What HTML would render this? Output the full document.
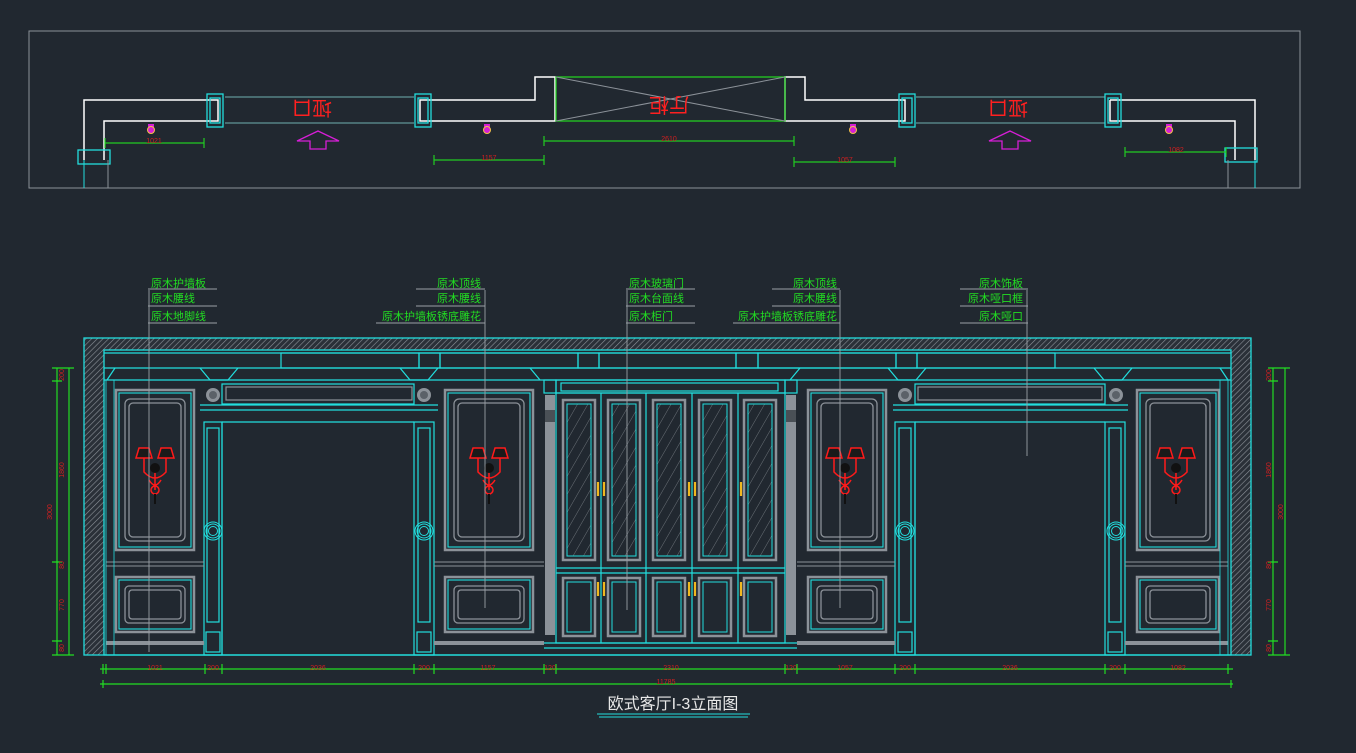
<!DOCTYPE html>
<html><head><meta charset="utf-8"><style>
html,body{margin:0;padding:0;background:#212830;}
svg{display:block}
text{font-family:"Liberation Sans","Noto Sans CJK SC",sans-serif;}
</style></head><body>
<svg width="1356" height="753" viewBox="0 0 1356 753" xmlns="http://www.w3.org/2000/svg">
<defs>
<pattern id="hat" width="4" height="4" patternUnits="userSpaceOnUse" patternTransform="rotate(45)">
<rect width="4" height="4" fill="#2a3038"/><line x1="0" y1="0" x2="0" y2="4" stroke="#8c9299" stroke-width="1.2"/></pattern>
<pattern id="gl" width="9" height="9" patternUnits="userSpaceOnUse" patternTransform="rotate(30)">
<line x1="0" y1="0" x2="0" y2="9" stroke="#7d848a" stroke-width="0.8"/></pattern>
<g id="sc">
<path d="M-16,-22 h10 l3,10 h-16z M6,-22 h10 l3,10 h-16z" fill="#1a1a1a" stroke="#ff1a1a" stroke-width="1.5"/>
<path d="M-11,-12 v14 q11,12 22,0 v-14 M0,-4 v24 M-6,10 q6,10 12,0" fill="none" stroke="#ff1a1a" stroke-width="1.5"/>
<circle cx="0" cy="-2" r="5" fill="#111"/><circle cx="0" cy="20" r="4" fill="none" stroke="#ff1a1a" stroke-width="1.5"/>
<line x1="0" y1="24" x2="0" y2="34" stroke="#111" stroke-width="2"/>
</g>
<g id="ros"><circle r="7" fill="#8c9299"/><circle r="4" fill="#5b6168"/></g>
<g id="ring" fill="none" stroke="#22dede"><circle r="7"/><circle r="4.5"/><circle r="9"/></g>
<g id="arr"><path d="M0,0 L-21,10 L-8,10 L-8,18 L8,18 L8,10 L21,10Z" fill="none" stroke="#d61ed6" stroke-width="1.3"/></g>
<g id="dot"><rect x="-3" y="-6" width="6" height="3" fill="#d61ed6"/><circle r="3.5" fill="#d61ed6" stroke="#f5c04a" stroke-width="1"/></g>
</defs>

<!-- PLAN -->
<rect x="29" y="31" width="1271" height="157" fill="none" stroke="#8c9299" stroke-width="1"/>
<g fill="none" stroke="#ffffff" stroke-width="1.5">
<path d="M84,160 V100 H218 V121 H104 V160"/>
<path d="M420,100 H535 V77 H555 V121 H420Z"/>
<path d="M785,77 H805 V100 H905 V121 H785Z"/>
<path d="M1110,100 H1255 V160 M1235,160 V121 H1110 V100"/>
</g>
<g fill="none" stroke="#6fb0b0" stroke-width="1"><line x1="225" y1="97" x2="414" y2="97"/><line x1="225" y1="123" x2="414" y2="123"/><line x1="916" y1="97" x2="1105" y2="97"/><line x1="916" y1="123" x2="1105" y2="123"/></g>
<rect x="556" y="77" width="229" height="44" fill="none" stroke="#22cc22" stroke-width="1.3"/>
<path d="M556,77 L785,121 M785,77 L556,121" stroke="#8c9299" stroke-width="1"/>
<g fill="none" stroke="#22dede" stroke-width="1.3">
<rect x="207" y="94" width="16" height="33"/><rect x="210" y="98" width="10" height="25"/>
<rect x="415" y="94" width="16" height="33"/><rect x="418" y="98" width="10" height="25"/>
<rect x="899" y="94" width="16" height="33"/><rect x="902" y="98" width="10" height="25"/>
<rect x="1105" y="94" width="16" height="33"/><rect x="1108" y="98" width="10" height="25"/>
<rect x="78" y="150" width="32" height="14"/><rect x="1225" y="148" width="32" height="14"/>
</g>
<line x1="108" y1="160" x2="108" y2="188" stroke="#8c9299"/><line x1="1228" y1="160" x2="1228" y2="188" stroke="#8c9299"/>
<line x1="84" y1="160" x2="84" y2="188" stroke="#22dede"/><line x1="1255" y1="160" x2="1255" y2="188" stroke="#22dede"/>
<g font-size="20" text-anchor="middle" fill="#ff2020">
<text transform="translate(312,101) rotate(180)">垭口</text>
<text transform="translate(1008,101) rotate(180)">垭口</text>
<text transform="translate(669,98) rotate(180)">厅柜</text>
</g>
<use href="#arr" x="318" y="131"/><use href="#arr" x="1010" y="131"/>
<use href="#dot" x="151" y="130"/><use href="#dot" x="487" y="130"/><use href="#dot" x="853" y="130"/><use href="#dot" x="1169" y="130"/>
<g stroke="#22cc22" stroke-width="1.2">
<line x1="105" y1="143" x2="204" y2="143"/><line x1="105" y1="138" x2="105" y2="148"/><line x1="204" y1="138" x2="204" y2="148"/>
<line x1="434" y1="160" x2="544" y2="160"/><line x1="434" y1="155" x2="434" y2="165"/><line x1="544" y1="155" x2="544" y2="165"/>
<line x1="544" y1="141" x2="794" y2="141"/><line x1="544" y1="136" x2="544" y2="146"/><line x1="794" y1="136" x2="794" y2="146"/>
<line x1="794" y1="162" x2="895" y2="162"/><line x1="794" y1="157" x2="794" y2="167"/><line x1="895" y1="157" x2="895" y2="167"/>
<line x1="1125" y1="152" x2="1226" y2="152"/><line x1="1125" y1="147" x2="1125" y2="157"/><line x1="1226" y1="147" x2="1226" y2="157"/>
</g>
<g font-size="7" fill="#d02020" text-anchor="middle">
<text x="154" y="143">1021</text><text x="489" y="160">1157</text><text x="669" y="141">2610</text><text x="845" y="162">1057</text><text x="1176" y="152">1082</text>
</g>

<!-- ELEVATION -->
<rect x="84" y="338" width="1167" height="317" fill="url(#hat)"/>
<rect x="104" y="350" width="1127" height="305" fill="#212830"/>
<rect x="84" y="338" width="1167" height="317" fill="none" stroke="#22dede" stroke-width="1.3"/>
<rect x="104" y="350" width="1127" height="305" fill="none" stroke="#22dede" stroke-width="1.3"/>
<g fill="none" stroke="#22dede" stroke-width="1.2">
<line x1="104" y1="353" x2="1231" y2="353"/>
<line x1="104" y1="368" x2="1231" y2="368"/>
<line x1="104" y1="380" x2="1231" y2="380"/>
<rect x="281" y="353" width="138" height="15"/><rect x="419" y="353" width="21" height="15"/><rect x="440" y="353" width="138" height="15"/>
<rect x="578" y="353" width="21" height="15"/><rect x="599" y="353" width="137" height="15"/><rect x="736" y="353" width="22" height="15"/>
<rect x="758" y="353" width="138" height="15"/><rect x="896" y="353" width="21" height="15"/><rect x="917" y="353" width="138" height="15"/>
<path d="M107,380 l8,-12 M200,368 l10,12 h18 l10,-12 M400,368 l10,12 h18 l10,-12 M530,368 l10,12 M800,368 l-10,12 M888,368 l10,12 h18 l10,-12 M1094,368 l10,12 h18 l10,-12 M1220,368 l8,12"/>
<rect x="222" y="384" width="192" height="20"/><rect x="226" y="387" width="186" height="13" stroke="#8c9299"/>
<rect x="915" y="384" width="190" height="20"/><rect x="918" y="387" width="184" height="13" stroke="#8c9299"/>
<line x1="200" y1="405" x2="438" y2="405"/><line x1="200" y1="410" x2="438" y2="410"/><line x1="222" y1="422" x2="414" y2="422"/>
<line x1="893" y1="405" x2="1128" y2="405"/><line x1="893" y1="410" x2="1128" y2="410"/><line x1="915" y1="422" x2="1105" y2="422"/>
<rect x="204" y="422" width="18" height="233"/><rect x="207" y="428" width="12" height="194"/><rect x="206" y="632" width="14" height="20"/>
<rect x="414" y="422" width="20" height="233"/><rect x="418" y="428" width="12" height="194"/><rect x="417" y="632" width="14" height="20"/>
<rect x="895" y="422" width="20" height="233"/><rect x="899" y="428" width="12" height="194"/><rect x="898" y="632" width="14" height="20"/>
<rect x="1105" y="422" width="20" height="233"/><rect x="1109" y="428" width="12" height="194"/><rect x="1108" y="632" width="14" height="20"/>
<line x1="222" y1="422" x2="222" y2="655"/><line x1="915" y1="422" x2="915" y2="655"/>
<rect x="556" y="380" width="229" height="13"/><rect x="561" y="383" width="217" height="8"/>
<rect x="556" y="393" width="229" height="250"/>
<line x1="556" y1="568" x2="785" y2="568"/><line x1="556" y1="573" x2="785" y2="573"/>
<line x1="601" y1="393" x2="601" y2="643"/><line x1="646" y1="393" x2="646" y2="643"/><line x1="692" y1="393" x2="692" y2="643"/><line x1="738" y1="393" x2="738" y2="643"/>
<line x1="544" y1="643" x2="797" y2="643"/><line x1="544" y1="648" x2="797" y2="648"/>
<rect x="544" y="380" width="12" height="13"/><rect x="785" y="380" width="12" height="13"/>
</g>
<rect x="545" y="395" width="10" height="240" fill="#8c9299"/><rect x="786" y="395" width="10" height="240" fill="#8c9299"/>
<rect x="545" y="410" width="10" height="12" fill="#4a5056"/><rect x="786" y="410" width="10" height="12" fill="#4a5056"/>
<g fill="none">
<g stroke="#8c9299" stroke-width="2.5">
<rect x="563" y="400" width="32" height="160"/><rect x="608" y="400" width="32" height="160"/><rect x="653" y="400" width="32" height="160"/><rect x="699" y="400" width="32" height="160"/><rect x="744" y="400" width="32" height="160"/>
<rect x="563" y="578" width="32" height="58"/><rect x="608" y="578" width="32" height="58"/><rect x="653" y="578" width="32" height="58"/><rect x="699" y="578" width="32" height="58"/><rect x="744" y="578" width="32" height="58"/>
</g>
<g stroke="#22dede" stroke-width="1" fill="url(#gl)">
<rect x="567" y="404" width="24" height="152"/><rect x="612" y="404" width="24" height="152"/><rect x="657" y="404" width="24" height="152"/><rect x="703" y="404" width="24" height="152"/><rect x="748" y="404" width="24" height="152"/>
</g>
<g stroke="#22dede" stroke-width="1">
<rect x="567" y="582" width="24" height="50"/><rect x="612" y="582" width="24" height="50"/><rect x="657" y="582" width="24" height="50"/><rect x="703" y="582" width="24" height="50"/><rect x="748" y="582" width="24" height="50"/>
</g>
</g>
<g stroke="#f0b820" stroke-width="2.2" fill="none">
<path d="M598,482 v14 M604,482 v14 M689,482 v14 M695,482 v14 M741,482 v14 M598,582 v14 M604,582 v14 M689,582 v14 M695,582 v14 M741,582 v14"/>
</g>
<g fill="none">
<g stroke="#8c9299" stroke-width="2.5">
<rect x="116" y="390" width="78" height="160"/><rect x="445" y="390" width="88" height="160"/><rect x="808" y="390" width="78" height="160"/><rect x="1137" y="390" width="82" height="160"/>
<rect x="116" y="577" width="78" height="55"/><rect x="445" y="577" width="88" height="55"/><rect x="808" y="577" width="78" height="55"/><rect x="1137" y="577" width="82" height="55"/>
</g>
<g stroke="#22dede" stroke-width="1.1">
<rect x="119" y="393" width="72" height="154"/><rect x="448" y="393" width="82" height="154"/><rect x="811" y="393" width="72" height="154"/><rect x="1140" y="393" width="76" height="154"/>
<rect x="119" y="580" width="72" height="49"/><rect x="448" y="580" width="82" height="49"/><rect x="811" y="580" width="72" height="49"/><rect x="1140" y="580" width="76" height="49"/>
</g>
<g stroke="#8c9299" stroke-width="1.3">
<rect x="125" y="399" width="60" height="142" rx="5"/><rect x="454" y="399" width="70" height="142" rx="5"/><rect x="817" y="399" width="60" height="142" rx="5"/><rect x="1146" y="399" width="64" height="142" rx="5"/>
<rect x="129" y="403" width="52" height="134" rx="4"/><rect x="458" y="403" width="62" height="134" rx="4"/><rect x="821" y="403" width="52" height="134" rx="4"/><rect x="1150" y="403" width="56" height="134" rx="4"/>
<rect x="125" y="586" width="60" height="37" rx="4"/><rect x="454" y="586" width="70" height="37" rx="4"/><rect x="817" y="586" width="60" height="37" rx="4"/><rect x="1146" y="586" width="64" height="37" rx="4"/>
<rect x="129" y="590" width="52" height="29" rx="3"/><rect x="458" y="590" width="62" height="29" rx="3"/><rect x="821" y="590" width="52" height="29" rx="3"/><rect x="1150" y="590" width="56" height="29" rx="3"/>
</g>
</g>
<g stroke="#8c9299" stroke-width="1">
<path d="M106,562 H204 M106,566 H204 M434,562 H544 M434,566 H544 M797,562 H895 M797,566 H895 M1125,562 H1228 M1125,566 H1228"/>
</g>
<g fill="#8c9299">
<rect x="106" y="641" width="98" height="4"/><rect x="434" y="641" width="110" height="4"/><rect x="797" y="641" width="98" height="4"/><rect x="1125" y="641" width="103" height="4"/>
</g>
<g stroke="#22dede" fill="none"><path d="M106,380 V655 M1228,380 V655 M114,380 V655 M1220,380 V655" stroke-width="0.8"/></g>
<use href="#ros" x="213" y="395"/><use href="#ros" x="424" y="395"/><use href="#ros" x="905" y="395"/><use href="#ros" x="1116" y="395"/>
<use href="#ring" x="213" y="531"/><use href="#ring" x="424" y="531"/><use href="#ring" x="905" y="531"/><use href="#ring" x="1116" y="531"/>
<use href="#sc" x="155" y="470"/><use href="#sc" x="489" y="470"/><use href="#sc" x="845" y="470"/><use href="#sc" x="1176" y="470"/>

<g stroke="#9aa0a6" stroke-width="0.9">
<line x1="149" y1="290" x2="149" y2="652"/><line x1="485" y1="290" x2="485" y2="608"/><line x1="627" y1="290" x2="627" y2="610"/><line x1="840" y1="290" x2="840" y2="608"/><line x1="1027" y1="290" x2="1027" y2="456"/>
<path d="M148,289 H217 M148,306 H217 M148,323 H217 M416,289 H485 M416,306 H485 M376,323 H485 M626,289 H695 M626,306 H695 M626,323 H695 M772,289 H840 M772,306 H840 M733,323 H840 M960,289 H1028 M960,306 H1028 M960,323 H1028"/>
</g>
<g font-size="11" fill="#22dd22">
<text x="151" y="287">原木护墙板</text><text x="151" y="302">原木腰线</text><text x="151" y="320">原木地脚线</text>
<g text-anchor="end"><text x="481" y="287">原木顶线</text><text x="481" y="302">原木腰线</text><text x="481" y="320">原木护墙板锈底雕花</text>
<text x="837" y="287">原木顶线</text><text x="837" y="302">原木腰线</text><text x="837" y="320">原木护墙板锈底雕花</text>
<text x="1023" y="287">原木饰板</text><text x="1023" y="302">原木哑口框</text><text x="1023" y="320">原木哑口</text></g>
<text x="629" y="287">原木玻璃门</text><text x="629" y="302">原木台面线</text><text x="629" y="320">原木柜门</text>
</g>

<g stroke="#22dd22" stroke-width="1.2">
<line x1="57" y1="368" x2="57" y2="655"/><line x1="69" y1="368" x2="69" y2="655"/>
<line x1="1273" y1="368" x2="1273" y2="655"/><line x1="1285" y1="368" x2="1285" y2="655"/>
<path d="M52,368 H74 M52,381 H62 M52,562 H62 M52,641 H62 M52,655 H74 M1268,368 H1290 M1268,381 H1278 M1268,562 H1278 M1268,641 H1278 M1268,655 H1290"/>
</g>
<g font-size="7" fill="#d02020" text-anchor="middle">
<text transform="translate(64,470) rotate(-90)">1860</text><text transform="translate(52,512) rotate(-90)">3000</text>
<text transform="translate(64,605) rotate(-90)">770</text><text transform="translate(64,565) rotate(-90)">80</text><text transform="translate(64,375) rotate(-90)">200</text><text transform="translate(64,648) rotate(-90)">80</text>
<text transform="translate(1271,470) rotate(-90)">1860</text><text transform="translate(1283,512) rotate(-90)">3000</text>
<text transform="translate(1271,605) rotate(-90)">770</text><text transform="translate(1271,565) rotate(-90)">80</text><text transform="translate(1271,375) rotate(-90)">200</text><text transform="translate(1271,648) rotate(-90)">80</text>
</g>
<g stroke="#22dd22" stroke-width="1.2">
<line x1="100" y1="669" x2="1233" y2="669"/><line x1="100" y1="684" x2="1233" y2="684"/>
<path d="M103,664 v10 M106,664 v10 M205,664 v10 M222,664 v10 M414,664 v10 M434,664 v10 M544,664 v10 M556,664 v10 M785,664 v10 M797,664 v10 M895,664 v10 M915,664 v10 M1105,664 v10 M1125,664 v10 M1228,664 v10 M103,680 v8 M1231,680 v8"/>
</g>
<g font-size="7" fill="#d02020" text-anchor="middle">
<text x="155" y="670">1021</text><text x="213" y="670">200</text><text x="318" y="670">2036</text><text x="424" y="670">200</text><text x="488" y="670">1157</text><text x="550" y="670">120</text><text x="671" y="670">2310</text><text x="791" y="670">120</text><text x="845" y="670">1057</text><text x="905" y="670">200</text><text x="1010" y="670">2036</text><text x="1115" y="670">200</text><text x="1178" y="670">1082</text>
<text x="666" y="684">11785</text>
</g>
<text x="673" y="709" font-size="16" fill="#e8e8e8" text-anchor="middle">欧式客厅I-3立面图</text>
<line x1="597" y1="714" x2="750" y2="714" stroke="#22dede" stroke-width="1"/>
<line x1="599" y1="717" x2="748" y2="717" stroke="#22dede" stroke-width="1"/>
</svg>
</body></html>
